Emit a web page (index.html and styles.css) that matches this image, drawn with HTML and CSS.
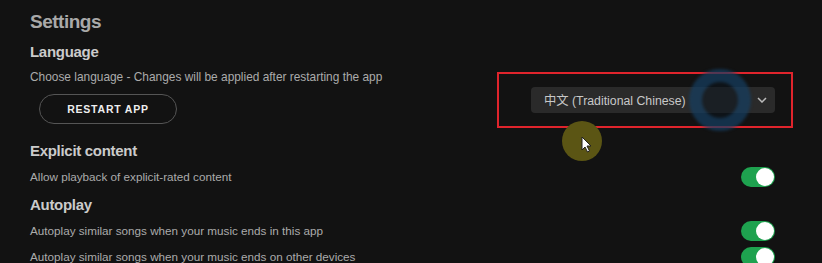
FILE: index.html
```html
<!DOCTYPE html>
<html lang="en">
	<head>
		<meta http-equiv="Content-Type" content="text/html; charset=utf-8" />
		<title>Settings</title>
		<link rel="stylesheet" href="styles.css">
	</head>
	<body>
		<div class="page">
			<h1 class="title">Settings</h1>

			<div class="section">
				<h2 class="head">Language</h2>
				<div class="lang-row">
					<div class="lang-left">
						<p class="desc desc-lang">Choose language - Changes will be applied after restarting the app</p>
						<button class="btn-restart">RESTART APP</button>
					</div>
					<div class="select">
						<span>中文 (Traditional Chinese)</span>
						<svg class="chev" width="10" height="6" viewBox="0 0 10 6"><path d="M1 1l4 4 4-4" fill="none" stroke="#bbb" stroke-width="1.5"/></svg>
					</div>
				</div>
			</div>

			<div class="section section-gap">
				<h2 class="head">Explicit content</h2>
				<div class="row">
					<p class="desc">Allow playback of explicit-rated content</p>
					<span class="toggle"></span>
				</div>
			</div>

			<div class="section">
				<h2 class="head">Autoplay</h2>
				<div class="row">
					<p class="desc">Autoplay similar songs when your music ends in this app</p>
					<span class="toggle"></span>
				</div>
				<div class="row">
					<p class="desc">Autoplay similar songs when your music ends on other devices</p>
					<span class="toggle"></span>
				</div>
			</div>

			<!-- 录屏标注 -->
			<div class="mark-box"></div>
			<div class="click-blue"></div>
			<div class="click-yellow"></div>
			<svg class="cursor" width="12" height="17" viewBox="0 0 12 17"><path d="M1 1v13l3-3 2.5 5 2-1-2.5-5h4z" fill="#fff" stroke="#222" stroke-width="1"/></svg>
		</div>
	</body>
</html>
```

FILE: styles.css
```css
*{
	padding: 0;
	margin: 0;
}
html, body {
	background: #121212;
	height: 100%;
	overflow: hidden;
}
body {
	font-family: "Liberation Sans", Arial, "Noto Sans CJK TC", sans-serif;
	color: #b3b3b3;
}
.page {
	position: relative;
	padding: 11px 47px 0 30px;
}
.title {
	font-size: 19px;
	font-weight: bold;
	line-height: 22px;
	color: #a9a9a9;
	letter-spacing: -0.5px;
}
.section {
	margin-top: 10px;
}
.section-gap {
	margin-top: 18px;
}
.section-gap + .section {
	margin-top: 9px;
}
.head {
	font-size: 15px;
	font-weight: bold;
	line-height: 18px;
	color: #cbcbcb;
	letter-spacing: -0.3px;
}
.desc {
	font-size: 11.7px;
	line-height: 16px;
	color: #ababab;
}
.desc-lang {
	font-size: 11.9px;
}
.lang-row {
	display: flex;
	justify-content: space-between;
	margin-top: 8px;
}
.btn-restart {
	display: block;
	margin: 9px 0 0 9px;
	width: 138px;
	height: 30px;
	border: 1px solid #555;
	border-radius: 15px;
	background: transparent;
	color: #eee;
	font-family: inherit;
	font-size: 10.5px;
	font-weight: bold;
	letter-spacing: 0.8px;
}
.select {
	display: flex;
	align-items: center;
	justify-content: space-between;
	margin-top: 18px;
	width: 244px;
	height: 26px;
	padding: 0 8px 0 13px;
	box-sizing: border-box;
	background: #2a2a2a;
	border-radius: 4px;
	font-size: 12.3px;
	color: #c8c8c8;
}
.row {
	display: flex;
	justify-content: space-between;
	align-items: center;
	margin-top: 7px;
}
.row + .row {
	margin-top: 6px;
}
.toggle {
	position: relative;
	width: 34px;
	height: 20px;
	border-radius: 10px;
	background: #1ea24f;
}
.toggle::after {
	content: "";
	position: absolute;
	right: 1px;
	top: 1px;
	width: 18px;
	height: 18px;
	border-radius: 50%;
	background: #fff;
}
.mark-box {
	position: absolute;
	left: 497px;
	top: 72px;
	width: 292px;
	height: 52px;
	border: 2px solid #e0242c;
}
.click-blue {
	position: absolute;
	left: 689px;
	top: 69px;
	width: 36px;
	height: 36px;
	border: 13px solid rgba(30, 95, 150, 0.4);
	border-radius: 50%;
	background: rgba(10, 20, 30, 0.5);
	filter: blur(1.5px);
}
.click-yellow {
	position: absolute;
	left: 562px;
	top: 121px;
	width: 40px;
	height: 40px;
	border-radius: 50%;
	background: #5b5514;
}
.cursor {
	position: absolute;
	left: 581px;
	top: 136px;
}
```
